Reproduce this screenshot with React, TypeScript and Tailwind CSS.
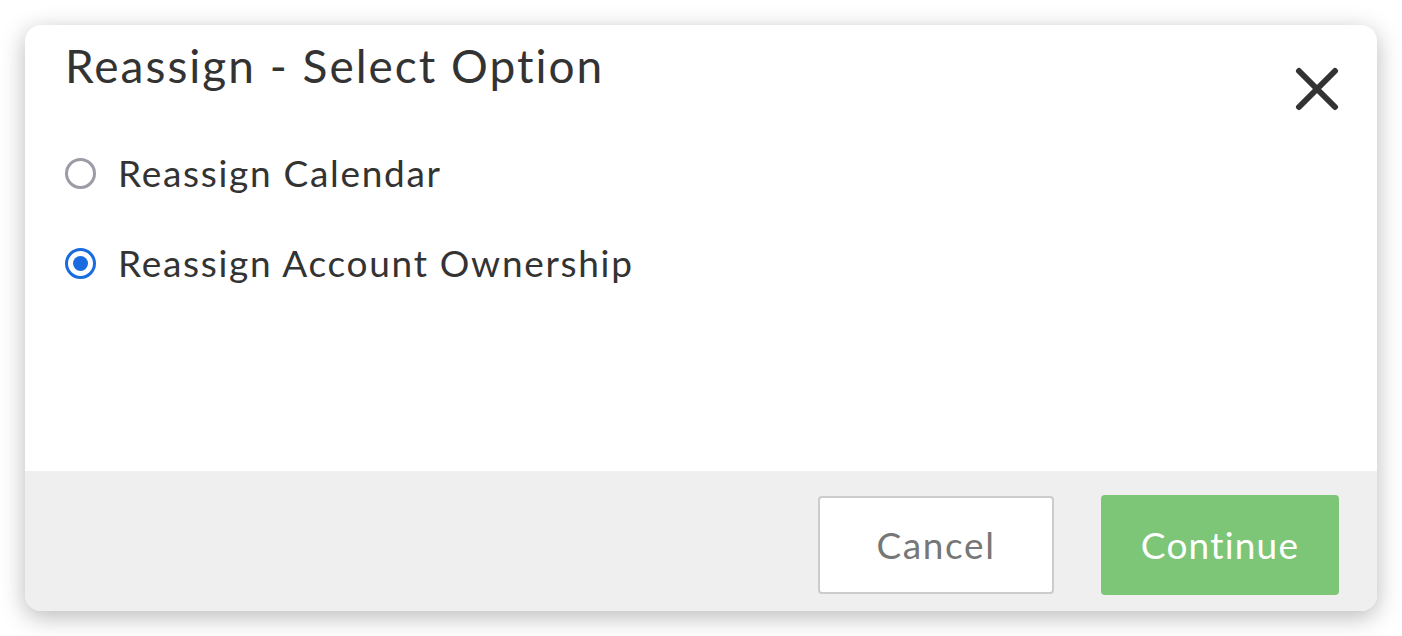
import React, { useState } from 'react';

const options = ['Reassign Calendar', 'Reassign Account Ownership'];

function Radio({ checked }: { checked: boolean }) {
  if (checked) {
    return (
      <span className="flex h-[31px] w-[31px] shrink-0 items-center justify-center rounded-full border-[3px] border-[#1a6be0] bg-white">
        <span className="h-[15px] w-[15px] rounded-full bg-[#1a6be0]" />
      </span>
    );
  }
  return <span className="h-[31px] w-[31px] shrink-0 rounded-full border-[3px] border-[#9d9ba6] bg-white" />;
}

export default function App() {
  const [selected, setSelected] = useState(1);

  return (
    <div className="min-h-screen bg-white p-[25px]" style={{ fontFamily: 'Lato, "Open Sans", sans-serif' }}>
      <div className="flex h-[586px] w-[1352px] flex-col overflow-hidden rounded-[16px] bg-white shadow-[0_6px_24px_rgba(0,0,0,0.28)]">
        <div className="flex h-[446px] flex-col pl-[40px] pr-[38px]">
          <div className="flex items-start justify-between">
            <h1 className="pt-[12px] text-[46px] leading-[58px] font-normal tracking-[2px] text-[#333333]">Reassign - Select Option</h1>
            <button className="mt-[42px] text-[#333333]">
              <svg width="44" height="44" viewBox="0 0 44 44" fill="none" stroke="currentColor" strokeWidth="6" strokeLinecap="round">
                <path d="M4 4 L40 40 M40 4 L4 40" />
              </svg>
            </button>
          </div>
          <div className="mt-[40px] flex flex-col gap-[46px]">
            {options.map((label, i) => (
              <label key={label} className="flex cursor-pointer items-center gap-[22px]" onClick={() => setSelected(i)}>
                <Radio checked={selected === i} />
                <span className="text-[37px] leading-[44px] tracking-[1.7px] text-[#333333]">{label}</span>
              </label>
            ))}
          </div>
        </div>
        <div className="flex flex-1 items-center justify-end gap-[47px] bg-[#efefef] pt-[8px] pr-[38px]">
          <button className="h-[98px] w-[236px] rounded-[4px] border-2 border-[#cccccc] bg-white text-[37px] tracking-[1.6px] text-[#777777]">
            Cancel
          </button>
          <button className="h-[100px] w-[238px] rounded-[4px] bg-[#7dc577] text-[37px] tracking-[1.2px] text-white">Continue</button>
        </div>
      </div>
    </div>
  );
}
